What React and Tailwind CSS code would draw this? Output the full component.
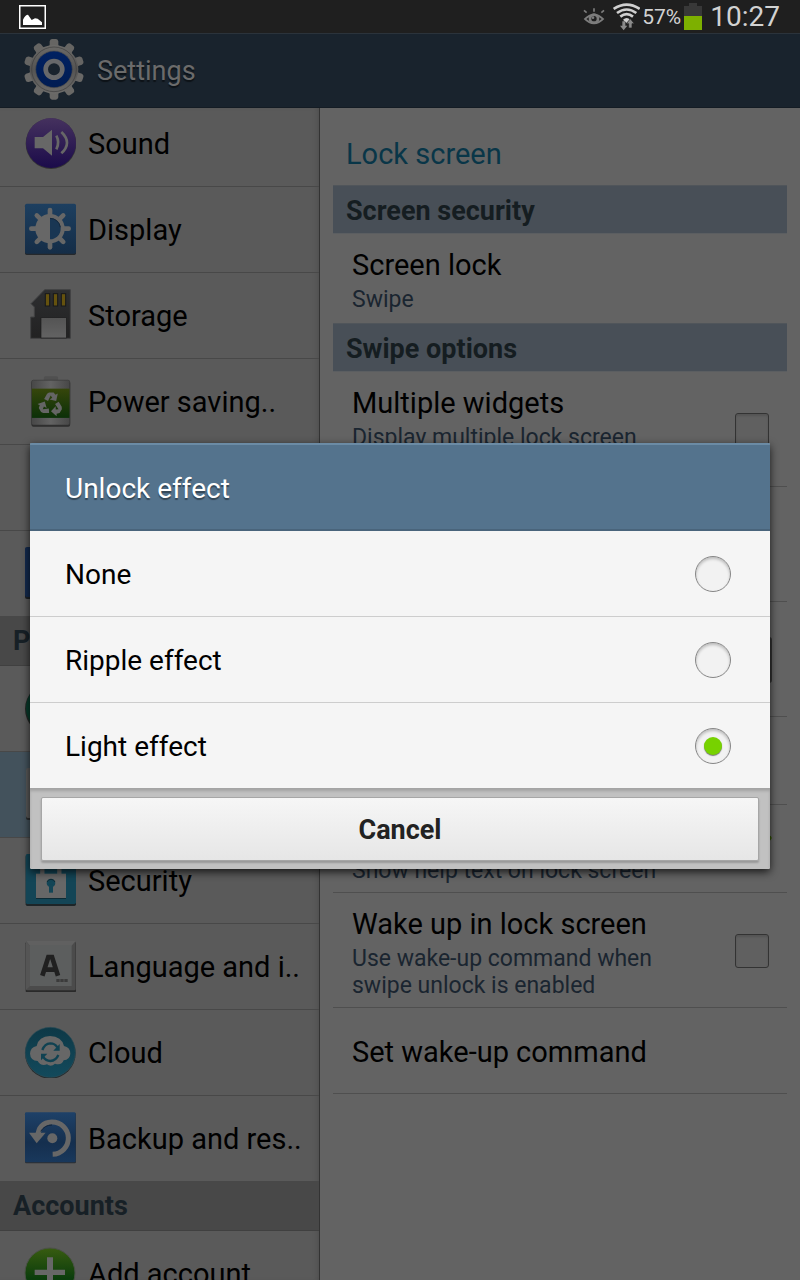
import React, { useState } from 'react';

const GearLogo = () => (
  <svg viewBox="69 117 186 186" className="h-[62px] w-[62px] overflow-visible" aria-hidden="true">
    <defs>
      <linearGradient id="gearBody" x1="0" y1="0" x2="0" y2="1">
        <stop offset="0" stopColor="#6b6a68" />
        <stop offset="0.5" stopColor="#555453" />
        <stop offset="1" stopColor="#6c6b69" />
      </linearGradient>
      <linearGradient id="gearBlue" x1="0" y1="0" x2="0" y2="1">
        <stop offset="0" stopColor="#002162" />
        <stop offset="1" stopColor="#001c52" />
      </linearGradient>
    </defs>
    {[0, 36, 72, 108, 144, 180, 216, 252, 288, 324].map((angle) => (
      <path
        key={angle}
        d="M140 148 Q149 142 149 134 L149 124 Q151 117 156 117 L168 117 Q173 117 175 124 L175 134 Q175 142 184 148 Z"
        fill={angle > 90 && angle < 270 ? '#696866' : '#666563'}
        transform={`rotate(${angle} 162 208)`}
      />
    ))}
    <circle cx="162" cy="208" r="73" fill="url(#gearBody)" />
    <circle cx="162" cy="208" r="67" fill="none" stroke="#3d3d3d" strokeWidth="2" />
    <circle cx="162" cy="208" r="55" fill="url(#gearBlue)" stroke="#4b4b4c" strokeWidth="2" />
    <circle cx="162" cy="208" r="25" fill="#19232d" stroke="#67686a" strokeWidth="14" />
  </svg>
);

const SoundIcon = () => (
  <svg viewBox="72 351 156 156" className="h-[52px] w-[52px]" aria-hidden="true">
    <defs>
      <linearGradient id="soundBg" x1="0" y1="0" x2="0" y2="1">
        <stop offset="0" stopColor="#45315e" />
        <stop offset="1" stopColor="#1b0b4a" />
      </linearGradient>
    </defs>
    <circle cx="153" cy="431" r="76" fill="#333" />
    <circle cx="153" cy="429" r="75" fill="url(#soundBg)" />
    <path d="M104 411 H129 L156 389 V467 L129 445 H104 Z" fill="#676767" />
    <path d="M169 407 Q180 427 169 448 M184 396 Q218 428 184 460" fill="none" stroke="#676767" strokeWidth="8" />
  </svg>
);

const DisplayIcon = () => (
  <svg viewBox="72 39 156 156" className="h-[52px] w-[52px]" aria-hidden="true">
    <defs>
      <linearGradient id="displayBg" x1="0" y1="0" x2="0" y2="1">
        <stop offset="0" stopColor="#1d3f60" />
        <stop offset="1" stopColor="#152d47" />
      </linearGradient>
    </defs>
    <rect x="75" y="44" width="153" height="151" rx="5" fill="#25282b" />
    <rect x="75" y="41" width="153" height="150" rx="5" fill="url(#displayBg)" />
    {[0, 45, 90, 135, 180, 225, 270, 315].map((angle) => (
      <path
        key={angle}
        d="M150 60 V80"
        stroke="#676767"
        strokeWidth="14"
        strokeLinecap="round"
        transform={`rotate(${angle} 150 116)`}
      />
    ))}
    <circle cx="150" cy="116" r="44" fill="#676767" />
    <path d="M150 84 A32 32 0 0 1 150 148 Z" fill="#193653" />
    <path d="M150 85 A31 31 0 0 1 181 112" fill="none" stroke="#14283d" strokeWidth="3" />
  </svg>
);

const StorageIcon = () => (
  <svg viewBox="72 297 156 156" className="h-[52px] w-[52px]" aria-hidden="true">
    <defs>
      <linearGradient id="cardBody" x1="0" y1="0" x2="0" y2="1">
        <stop offset="0" stopColor="#2d2e30" />
        <stop offset="1" stopColor="#222" />
      </linearGradient>
      <linearGradient id="cardLabel" x1="0" y1="0" x2="0" y2="1">
        <stop offset="0" stopColor="#545454" />
        <stop offset="1" stopColor="#636363" />
      </linearGradient>
    </defs>
    <path
      d="M134 299 H211 V445 H92 V381 H103 V351 L93 341 Z"
      fill="url(#cardBody)"
      stroke="#414243"
      strokeWidth="3"
    />
    {[136, 160, 184].map((x) => (
      <rect key={x} x={x} y="311" width="13" height="37" fill="#65520e" stroke="#17181b" strokeWidth="3" />
    ))}
    <rect x="123" y="383" width="76" height="61" fill="url(#cardLabel)" stroke="#1c1c1c" strokeWidth="2" />
  </svg>
);

const PowerSavingIcon = () => (
  <svg viewBox="72 555 156 160" className="h-[52px] w-[52px]" aria-hidden="true">
    <defs>
      <linearGradient id="cellMetal" x1="0" y1="0" x2="1" y2="0">
        <stop offset="0" stopColor="#474747" />
        <stop offset="0.5" stopColor="#636363" />
        <stop offset="1" stopColor="#474747" />
      </linearGradient>
      <linearGradient id="cellGreen" x1="0" y1="0" x2="0" y2="1">
        <stop offset="0" stopColor="#36460b" />
        <stop offset="1" stopColor="#0b3008" />
      </linearGradient>
    </defs>
    <rect x="131" y="559" width="44" height="18" rx="5" fill="#505050" />
    <rect x="93" y="575" width="119" height="139" rx="6" fill="#2c2c2c" />
    <rect x="93" y="571" width="118" height="138" rx="6" fill="url(#cellMetal)" stroke="#373737" strokeWidth="2" />
    <rect x="94" y="597" width="116" height="90" fill="url(#cellGreen)" />
    {[0, 120, 240].map((angle) => (
      <path
        key={angle}
        d="M132 629 L141 613 L147 609 H161 L167 616 L174 612 L169 635 L149 630 L157 625 L152 618 L144 635 Z"
        fill="#656565"
        transform={`rotate(${angle} 152 646)`}
      />
    ))}
  </svg>
);

const BatteryIcon = () => (
  <svg viewBox="0 0 52 52" className="h-[52px] w-[52px]" aria-hidden="true">
    <rect x="15" y="5" width="22" height="44" rx="2" fill="#0b3008" />
  </svg>
);

const AppsIcon = () => (
  <svg viewBox="0 0 52 52" className="h-[52px] w-[52px]" aria-hidden="true">
    <rect x="1" y="1" width="51" height="51" rx="2" fill="#1c2024" />
    <rect x="1" y="0" width="51" height="50" rx="2" fill="#12294d" />
  </svg>
);

const LocationIcon = () => (
  <svg viewBox="0 0 52 52" className="h-[52px] w-[52px]" aria-hidden="true">
    <circle cx="27" cy="27" r="26" fill="#222624" />
    <circle cx="27" cy="26" r="25" fill="#063a2a" />
  </svg>
);

const LockIcon = () => (
  <svg viewBox="0 0 52 52" className="h-[52px] w-[52px]" aria-hidden="true">
    <rect x="2" y="1" width="50" height="51" rx="2" fill="#2b2d2e" />
    <rect x="2" y="0" width="50" height="50" rx="2" fill="#585858" />
  </svg>
);

const SecurityIcon = () => (
  <svg viewBox="72 42 156 156" className="h-[52px] w-[52px]" aria-hidden="true">
    <rect x="77" y="45" width="151" height="153" rx="5" fill="#1d2528" />
    <rect x="77" y="42" width="151" height="150" rx="5" fill="#134556" />
    <path d="M127 104 V84 Q127 62 152 62 Q178 62 178 84 V104" fill="none" stroke="#676767" strokeWidth="13" />
    <path d="M108 104 H198 V177 H108 Z" fill="#0d2a34" />
    <path d="M108 101 H198 V174 H108 Z" fill="#676767" />
    <circle cx="153" cy="129" r="13" fill="#134556" />
    <path d="M147 134 H159 V158 H147 Z" fill="#134556" />
    <path d="M141 126 A13 13 0 0 1 165 126" fill="none" stroke="#0f2b35" strokeWidth="3" />
  </svg>
);

const LanguageIcon = () => (
  <svg viewBox="72 300 156 156" className="h-[52px] w-[52px]" aria-hidden="true">
    <rect x="77" y="306" width="151" height="151" rx="4" fill="#2a2a2a" />
    <rect x="78" y="303" width="149" height="148" rx="4" fill="#4b4b4b" />
    <path d="M78 303 H227 L214 318 H90 Z" fill="#606060" />
    <path d="M78 303 L90 318 V438 L78 450 Z" fill="#555" />
    <rect x="90" y="316" width="125" height="122" fill="#5c5e5e" />
    <path d="M127 407 L145 351 H156 L174 407 M136 389 H166" fill="none" stroke="#202020" strokeWidth="14" />
    <path d="M169 417 h10 v9 h-10 z M181 417 h10 v9 h-10 z M193 417 h10 v9 h-10 z" fill="#3b3b3b" />
  </svg>
);

const CloudIcon = () => (
  <svg viewBox="12 18 156 156" className="h-[52px] w-[52px]" aria-hidden="true">
    <defs>
      <linearGradient id="cloudBg" x1="0" y1="0" x2="0" y2="1">
        <stop offset="0" stopColor="#0d3846" />
        <stop offset="1" stopColor="#134a5c" />
      </linearGradient>
    </defs>
    <circle cx="91" cy="100" r="76" fill="#252b2d" />
    <circle cx="91" cy="97" r="75" fill="url(#cloudBg)" stroke="#2c4d57" strokeWidth="2" />
    <path
      d="M50 78 Q56 49 90 48 Q125 49 132 78 Q151 82 151 101 Q150 119 131 121 Q125 137 105 131 Q93 142 81 133 Q62 139 53 123 Q31 121 30 101 Q31 82 50 78 Z"
      fill="#676767"
    />
    <path d="M67 90 Q74 71 91 70 Q105 70 112 82" fill="none" stroke="#104252" strokeWidth="7" />
    <path d="M119 72 V92 H100 Z" fill="#104252" />
    <path d="M115 105 Q108 122 91 123 Q77 122 70 111" fill="none" stroke="#104252" strokeWidth="7" />
    <path d="M63 121 V101 H82 Z" fill="#104252" />
  </svg>
);

const BackupIcon = () => (
  <svg viewBox="72 156 156 156" className="h-[52px] w-[52px]" aria-hidden="true">
    <defs>
      <linearGradient id="backupBg" x1="0" y1="0" x2="0" y2="1">
        <stop offset="0" stopColor="#1e4168" />
        <stop offset="0.6" stopColor="#152f4e" />
        <stop offset="1" stopColor="#19385c" />
      </linearGradient>
    </defs>
    <rect x="75" y="159" width="153" height="151" rx="4" fill="#2c2f33" />
    <rect x="75" y="157" width="152" height="150" rx="4" fill="url(#backupBg)" />
    <path d="M113 230 Q116 188 155 186 A48 48 0 0 1 158 283" fill="none" stroke="#676767" strokeWidth="15" />
    <path d="M122 214 Q134 195 156 195" fill="none" stroke="#10233a" strokeWidth="3" />
    <path d="M87 218 H137 L110 250 Z" fill="#676767" />
    <circle cx="157" cy="235" r="15" fill="#676767" />
  </svg>
);

const AddIcon = () => (
  <svg viewBox="72 561 156 156" className="h-[52px] w-[52px]" aria-hidden="true">
    <defs>
      <linearGradient id="addBg" x1="0" y1="0" x2="0" y2="1">
        <stop offset="0" stopColor="#385c10" />
        <stop offset="0.6" stopColor="#0b3d0c" />
        <stop offset="1" stopColor="#0a3a0b" />
      </linearGradient>
    </defs>
    <circle cx="150" cy="639" r="75" fill="url(#addBg)" stroke="#4b5147" strokeWidth="3" />
    <path d="M141 592 H159 V629 H195 V645 H159 V686 H141 V645 H104 V629 H141 Z" fill="#676767" />
  </svg>
);

const deviceItems = [
  { label: 'Sound', Icon: SoundIcon },
  { label: 'Display', Icon: DisplayIcon },
  { label: 'Storage', Icon: StorageIcon },
  { label: 'Power saving..', Icon: PowerSavingIcon },
  { label: 'Battery', Icon: BatteryIcon },
  { label: 'Applications', Icon: AppsIcon },
];

const personalItems = [
  { label: 'Location', Icon: LocationIcon },
  { label: 'Lock screen', Icon: LockIcon, active: true },
  { label: 'Security', Icon: SecurityIcon },
  { label: 'Language and i..', Icon: LanguageIcon },
  { label: 'Cloud', Icon: CloudIcon },
  { label: 'Backup and res..', Icon: BackupIcon },
];

const accountItems = [{ label: 'Add account', Icon: AddIcon }];

const effects = ['None', 'Ripple effect', 'Light effect'];

const StatusBar = () => (
  <div className="flex h-[33px] shrink-0 items-center bg-[#1f1f1f] pl-[19px] pr-5 text-[#d2d2d2]">
    <svg viewBox="0 0 81 72" className="h-6 w-[27px]" aria-hidden="true">
      <rect x="2" y="2" width="77" height="68" fill="none" stroke="#fff" strokeWidth="5" />
      <path d="M12 60 V44 Q19 29 27 29 L38 45 L48 40 L56 41 L69 52 V60 Z" fill="#fff" />
    </svg>
    <div className="ml-auto flex items-center">
      <svg viewBox="67 20 66 60" className="h-5 w-[22px]" aria-hidden="true">
        <path d="M69 56 Q100 24 131 56 Q100 88 69 56 Z M77 56 Q100 77 123 56 Q100 35 77 56 Z" fill="#7c7c7c" fillRule="evenodd" />
        <circle cx="100" cy="55" r="12" fill="none" stroke="#7c7c7c" strokeWidth="8" />
        <circle cx="97" cy="52" r="4" fill="#7c7c7c" />
        <path d="M70 30 L78 37 M100 24 V34 M130 30 L122 37" stroke="#7c7c7c" strokeWidth="5" />
      </svg>
      <svg viewBox="159 7 81 84" className="ml-2 h-7 w-[27px]" aria-hidden="true">
        <g fill="none" stroke="#d0d0d0" strokeWidth="8">
          <path d="M161 25 Q200 -1 239 25" />
          <path d="M171 37 Q200 16 229 37" />
          <path d="M181 48 Q200 33 219 48" />
        </g>
        <path d="M189 57 Q200 47 211 57 L200 67 Z" fill="#d0d0d0" />
        <path d="M187 62 H196 V75 H202 L191 89 L180 75 H187 Z" fill="#8a8a8a" />
        <path d="M206 82 V69 H199 L211 54 L223 69 H216 V82 Z" fill="#8a8a8a" stroke="#1f1f1f" strokeWidth="2" />
      </svg>
      <span className="ml-[2px] text-[21px] leading-8">57%</span>
      <svg viewBox="0 0 18 27" className="ml-[3px] h-[27px] w-[18px]" aria-hidden="true">
        <path d="M5 0 H13 V3 H18 V13 H0 V3 H5 Z" fill="#383838" />
        <rect y="13" width="18" height="14" fill="#7db000" />
      </svg>
      <span className="ml-2 text-[28px] leading-8">10:27</span>
    </div>
  </div>
);

const SideHeading = ({ children }) => (
  <h2 className="flex h-[49px] items-center border-b border-[#404040] bg-[#484848] pl-[13px] text-[27px] font-bold text-[#172026]">
    {children}
  </h2>
);

const SideList = ({ items }) => (
  <ul>
    {items.map(({ label, Icon, active }) => (
      <li key={label} className="border-b border-[#484848]">
        <a
          href="#"
          className={`flex h-[85px] items-center gap-3 pb-px pl-6 text-[29px] text-black ${active ? 'bg-[#43525c]' : ''}`}
        >
          <Icon />
          <span className="pt-[3px]">{label}</span>
        </a>
      </li>
    ))}
  </ul>
);

const Category = ({ children }) => (
  <h3 className="flex h-[49px] items-center border-b border-t border-b-[#5b5e61] border-t-[#50555a] bg-[#484f57] px-[13px] pt-[3px] text-[27px] font-bold text-[#151d21]">
    {children}
  </h3>
);

const Tick = () => (
  <svg viewBox="0 0 40 40" className="absolute -top-1 left-0 h-10 w-10" aria-hidden="true">
    <path d="M6 20 L16 31 L34 9" fill="none" stroke="#2f5200" strokeWidth="5" strokeLinecap="round" />
  </svg>
);

const Preference = ({ title, summary, checkbox, checked, action, divider = true }) => (
  <label
    className={`flex items-center gap-4 pb-2 pl-[19px] pt-[10px] ${action ? 'pr-[15px]' : 'pr-[18px]'} ${
      divider ? 'border-b border-[#4f4f4f]' : 'border-b-2 border-transparent'
    } ${summary ? '' : 'min-h-[86px]'}`}
  >
    <span className="min-w-0 flex-1">
      <span className="block text-[29px] leading-[42px] text-black">{title}</span>
      {summary && <span className="block text-[23px] leading-[27px] text-[#1a2530]">{summary}</span>}
    </span>
    {checkbox && (
      <span className="relative h-[34px] w-[34px] shrink-0">
        <input
          type="checkbox"
          defaultChecked={checked}
          className="block h-[34px] w-[34px] appearance-none rounded-[3px] border border-[#333] bg-[#606060] shadow-[inset_0_2px_2px_#555]"
        />
        {checked && <Tick />}
      </span>
    )}
    {action && (
      <button type="button" aria-label="Options" className="h-[46px] w-[46px] rounded-[3px] border-2 border-[#333]" />
    )}
  </label>
);

const UnlockEffectDialog = ({ value, onChange }) => (
  <div className="absolute inset-x-0 bottom-0 top-8 flex items-center px-[30px]">
    <div
      role="dialog"
      aria-labelledby="dialog-title"
      className="w-full overflow-hidden rounded-[2px] bg-[#f5f5f5] shadow-[0_3px_9px_rgba(0,0,0,0.75)]"
    >
      <h2
        id="dialog-title"
        className="flex h-[88px] items-center border-b-2 border-t-2 border-b-[#49647b] border-t-[#6b8ba5] bg-[#54738d] px-[35px] pt-[3px] text-[28px] text-white [text-shadow:0_2px_1px_rgba(0,0,0,0.4)]"
      >
        Unlock effect
      </h2>
      <div className="divide-y divide-[#cdcdcd]">
        {effects.map((effect) => (
          <label
            key={effect}
            className="flex h-[86px] items-center justify-between pl-[35px] pr-[39px] text-[28px] text-black last:h-[85px]"
          >
            <span className="pt-[3px]">{effect}</span>
            <span className="relative h-9 w-9">
              <input
                type="radio"
                name="effect"
                value={effect}
                checked={value === effect}
                onChange={() => onChange(effect)}
                className="block h-9 w-9 appearance-none rounded-full border border-[#868686] bg-[#f2f2f2] shadow-[inset_0_2px_3px_rgba(0,0,0,0.22)]"
              />
              {value === effect && (
                <span className="absolute inset-0 m-auto h-[18px] w-[18px] rounded-full bg-[#77d200] shadow-[0_1px_1px_#777]" />
              )}
            </span>
          </label>
        ))}
      </div>
      <div className="bg-[#c1c1c1] px-[11px] pb-2 pt-[9px] shadow-[inset_0_3px_3px_#a3a3a3]">
        <button
          type="button"
          className="block h-16 w-full rounded-[2px] border border-[#a6a6a6] bg-linear-to-b from-[#f6f6f6] to-[#e6e6e6] pt-[2px] text-[27px] font-bold text-[#222] shadow-[0_2px_2px_#999]"
        >
          Cancel
        </button>
      </div>
    </div>
  </div>
);

const App = () => {
  const [effect, setEffect] = useState('Light effect');

  return (
    <div className="relative flex h-screen flex-col overflow-hidden bg-[#636363] font-['Roboto',sans-serif]">
      <StatusBar />
      <header className="flex h-[75px] shrink-0 items-center gap-3 border-b border-t border-b-[#141c24] border-t-[#2b333b] bg-[#19232d] pb-px pl-[23px]">
        <GearLogo />
        <h1 className="pt-[2px] text-[27px] text-[#6b6b6b] [text-shadow:0_2px_1px_rgba(0,0,0,0.5)]">Settings</h1>
      </header>

      <div className="flex min-h-0 flex-1">
        <nav className="w-2/5 overflow-hidden border-r border-[#333] bg-[#5a5a5a] shadow-[inset_-4px_0_4px_-2px_#505050]">
          <div className="-mt-[7px]">
            <SideList items={deviceItems} />
            <SideHeading>Personal</SideHeading>
            <SideList items={personalItems} />
            <SideHeading>Accounts</SideHeading>
            <SideList items={accountItems} />
          </div>
        </nav>

        <main className="flex-1 overflow-hidden px-[13px]">
          <h2 className="flex h-[77px] items-end px-[13px] pb-[11px] text-[29px] leading-10 text-[#093648]">Lock screen</h2>
          <Category>Screen security</Category>
          <Preference title="Screen lock" summary="Swipe" divider={false} />
          <Category>Swipe options</Category>
          <Preference title="Multiple widgets" summary={<>Display multiple lock screen<br />widgets</>} checkbox />
          <Preference title="Lock screen widgets" summary={<>Set options for lock screen<br />widgets</>} />
          <Preference title="Shortcuts" summary={<>Set shortcuts on<br />lock screen</>} action />
          <Preference title="Unlock effect" summary="Light effect" />
          <Preference title="Help text" summary="Show help text on lock screen" checkbox checked />
          <Preference
            title="Wake up in lock screen"
            summary={<>Use wake-up command when<br />swipe unlock is enabled</>}
            checkbox
          />
          <Preference title="Set wake-up command" />
        </main>
      </div>

      <UnlockEffectDialog value={effect} onChange={setEffect} />
    </div>
  );
};

export default App;
